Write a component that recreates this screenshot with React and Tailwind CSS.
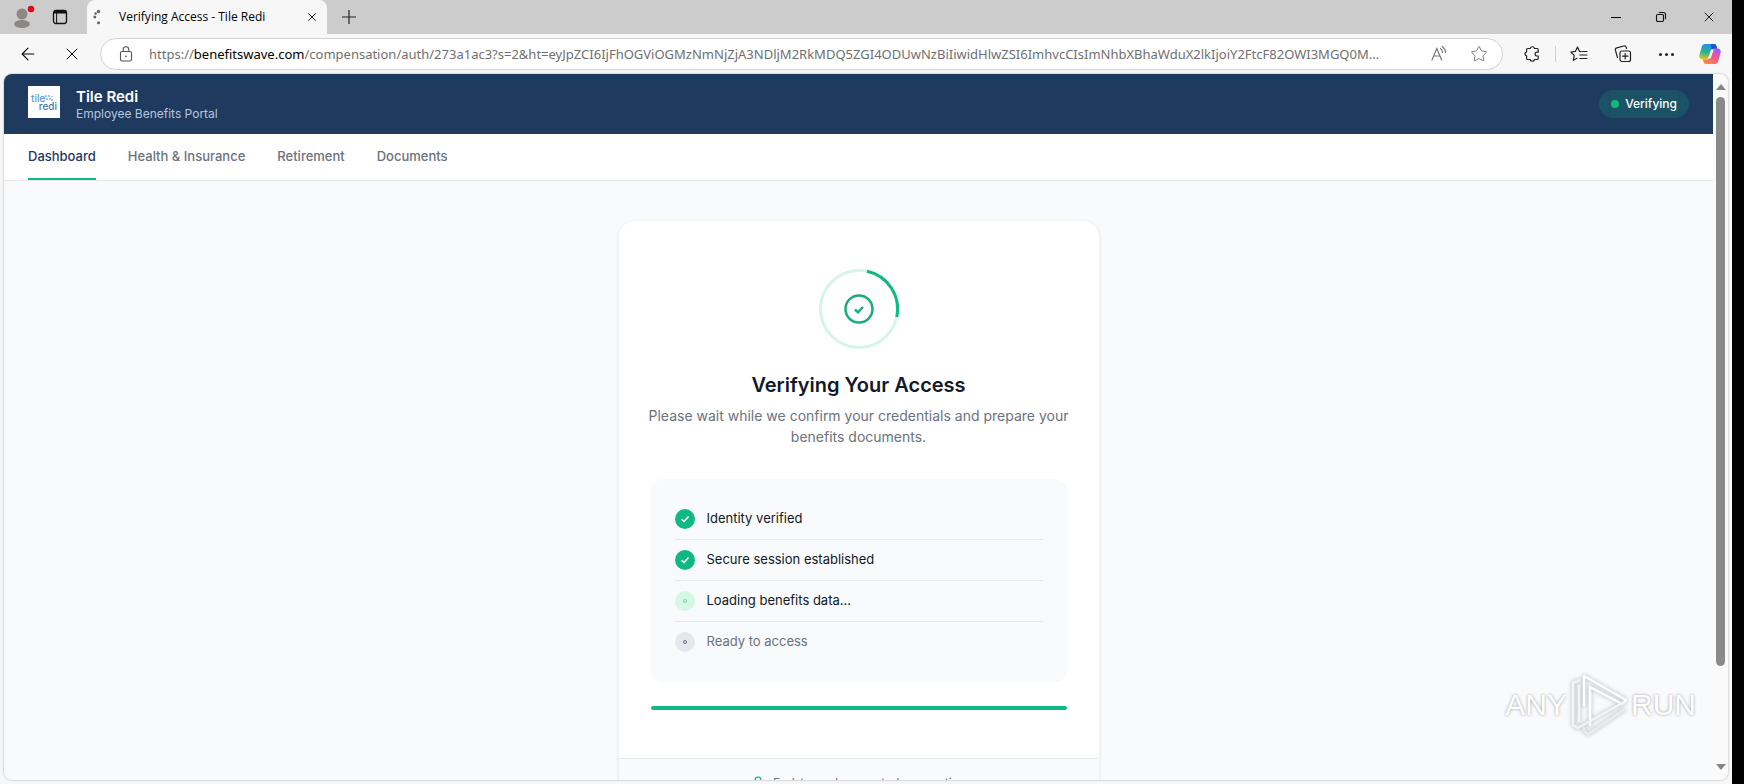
import { ArrowLeft, X, Star, Lock } from "lucide-react";

const URL_REST =
  "/compensation/auth/273a1ac3?s=2&ht=eyJpZCI6IjFhOGViOGMzNmNjZjA3NDljM2RkMDQ5ZGI4ODUwNzBiIiwidHlwZSI6ImhvcCIsImNhbXBhaWduX2lkIjoiY2FtcF82OWI3MGQ0M...";

const navLinks = ["Dashboard", "Health & Insurance", "Retirement", "Documents"];

const steps = [
  { label: "Identity verified", status: "done" },
  { label: "Secure session established", status: "done" },
  { label: "Loading benefits data...", status: "active" },
  { label: "Ready to access", status: "pending" },
];

const ProfileIcon = () => (
  <svg width="24" height="28" viewBox="0 0 24 28" className="block">
    <circle cx="10" cy="11" r="5.5" fill="#8c8885" />
    <ellipse cx="10" cy="21" rx="8" ry="4" fill="#8c8885" />
    <circle cx="19" cy="6" r="4.2" fill="#e3c9c9" />
    <circle cx="19" cy="6" r="3.3" fill="#d90b1c" />
  </svg>
);

const WorkspaceIcon = () => (
  <svg width="16" height="16" viewBox="0 0 16 16" fill="none" stroke="#111" strokeWidth="1.3" className="block">
    <rect x="1.5" y="1.5" width="13" height="13" rx="2.5" />
    <path d="M2 3h12" strokeWidth="3" />
    <path d="M4.6 3v11" strokeWidth="1" />
  </svg>
);

const TabSpinner = () => (
  <svg width="16" height="16" viewBox="0 0 16 16" fill="#666" className="block">
    <circle cx="7.5" cy="2.5" r="1.7" />
    <circle cx="4.6" cy="4.6" r="1.3" />
    <circle cx="3.8" cy="8" r="1.5" />
    <circle cx="7.5" cy="13.8" r="1.5" />
  </svg>
);

const PlusIcon = () => (
  <svg width="16" height="16" viewBox="0 0 16 16" stroke="#222" strokeWidth="1.2" className="block">
    <path d="M8 1v14M1 8h14" />
  </svg>
);

const RestoreIcon = () => (
  <svg width="12" height="12" viewBox="0 0 12 12" fill="none" stroke="#111" strokeWidth="1.1" className="block">
    <rect x="1.5" y="3.5" width="7" height="7" rx="1.2" />
    <path d="M3.8 1.5h4.7a2 2 0 0 1 2 2v4.7" />
  </svg>
);

const PadlockIcon = () => (
  <svg width="16" height="16" viewBox="0 0 16 16" fill="none" stroke="#555" strokeWidth="1.1" className="block">
    <rect x="2.5" y="5.5" width="11" height="9.5" rx="1.6" />
    <path d="M5.2 5.5V3.6a2.8 2.8 0 0 1 5.6 0v1.9" />
    <circle cx="8" cy="10.3" r="0.9" fill="#555" stroke="none" />
  </svg>
);

const ReadAloudIcon = () => (
  <svg width="18" height="18" viewBox="0 0 18 18" fill="none" stroke="#777" strokeWidth="1.2" strokeLinecap="round" className="block">
    <path d="M2 15 6.8 3.5 11.6 15M3.6 11h6.4" />
    <path d="M10.5 3.5q2 1.6 2 4M12.3 1.4q3.2 2.4 3.2 6.2" />
  </svg>
);

// Outline with knobs on the top, left and bottom and a socket cut into the right side
const PuzzleIcon = () => (
  <svg width="18" height="18" viewBox="0 0 18 18" fill="none" stroke="#222" strokeWidth="1.2" strokeLinejoin="round" className="block">
    <path d="M4.600 3.500h2.600a2.200 2.200 0 0 1 4.300 0h2.700a1 1 0 0 1 1 1v2.700h-1.200a1.900 1.900 0 0 0 0 3.800h1.200v2.500a1 1 0 0 1-1 1h-2.700a2.200 2.200 0 0 1-4.300 0H4.600a1 1 0 0 1-1-1v-2.600a2.100 2.100 0 0 1 0-4.100V4.500a1 1 0 0 1 1-1z" />
  </svg>
);

const FavoritesIcon = () => (
  <svg width="18" height="18" viewBox="0 0 18 18" fill="none" stroke="#222" strokeWidth="1.2" strokeLinejoin="round" strokeLinecap="round" className="block">
    <path d="M10.800 6.600 9.600 6.400 7.500 2 5.400 6.400.900 7l3.300 3.300-.8 5 3.600-2" />
    <path d="M12 6.500h5M9.800 10h7.200M9.800 13.500h7.200" />
  </svg>
);

const CollectionsIcon = () => (
  <svg width="18" height="18" viewBox="0 0 18 18" fill="none" stroke="#222" strokeWidth="1.2" strokeLinecap="round" className="block">
    <rect x="6" y="6" width="10.5" height="10.5" rx="2" />
    <path d="M11.2 8.5v5.5M8.500 11.200H14" />
    <path d="M3.500 12.500 1.400 5.200a2 2 0 0 1 1.400-2.400l7-1.800a2 2 0 0 1 2.400 1.400l.3 1" />
  </svg>
);

const CopilotIcon = () => (
  <svg width="24" height="24" viewBox="0 0 24 24" className="block">
    <defs>
      <linearGradient id="cpA" x1="0.4" y1="0" x2="0.2" y2="1">
        <stop offset="0" stopColor="#1f8ff0" />
        <stop offset="0.55" stopColor="#2fb58a" />
        <stop offset="1" stopColor="#f2c51b" />
      </linearGradient>
      <linearGradient id="cpB" x1="0.7" y1="0" x2="0.3" y2="1">
        <stop offset="0" stopColor="#a759f2" />
        <stop offset="0.5" stopColor="#f0568f" />
        <stop offset="1" stopColor="#fb8a3c" />
      </linearGradient>
    </defs>
    <path d="M7 2h9c1.300 0 2 .8 2.400 2l.9 3h-3.500c-1.600 0-2.600.8-3 2.300L11.100 15c-.5 1.600-1.500 2.500-3 2.500H4.500C1.800 17.500.8 15.300 1.500 12.800l2.300-8C4.300 3 5.400 2 7 2z" fill="url(#cpA)" />
    <path d="M13 2h3c1.300 0 2 .8 2.400 2l.9 3h-3.500c-1 0-1.800.3-2.300 1z" fill="#1b57c9" />
    <path d="M17 22H8c-1.300 0-2-.8-2.400-2l-.8-2.500h3.500c1.600 0 2.600-.8 3-2.300L13.200 9c.5-1.600 1.500-2.500 3-2.500h3.300c2.700 0 3.700 2.200 3 4.700l-2.300 8c-.5 1.800-1.600 2.800-3.200 2.800z" fill="url(#cpB)" />
    <path d="M13.200 7.500h2.600l-3.200 9h-2.800z" fill="#f7f7f7" />
  </svg>
);

const TitleBar = () => (
  <div className="flex h-[34px] items-center bg-[#cccccc]">
    <div className="flex w-[87px] items-center gap-4 pl-3">
      <button aria-label="Profile"><ProfileIcon /></button>
      <button aria-label="Workspaces"><WorkspaceIcon /></button>
    </div>
    <div className="flex h-full w-[240px] items-center rounded-t-lg bg-[#f7f7f7] pr-2 pl-1">
      <TabSpinner />
      <span className="ml-3 flex-1 text-xs text-black">Verifying Access - Tile Redi</span>
      <button aria-label="Close tab"><X size={14} strokeWidth={1.5} /></button>
    </div>
    <button aria-label="New tab" className="ml-[14px]"><PlusIcon /></button>
    <div className="ml-auto flex items-center gap-[34px] pr-[15px]">
      <button aria-label="Minimize" className="h-px w-[10px] bg-black" />
      <button aria-label="Restore"><RestoreIcon /></button>
      <button aria-label="Close window"><X size={16} strokeWidth={1.3} /></button>
    </div>
  </div>
);

const Toolbar = () => (
  <div className="flex h-10 items-center bg-[#f7f7f7] pr-[10px] pl-[18px]">
    <button aria-label="Back"><ArrowLeft size={20} strokeWidth={1.3} /></button>
    <button aria-label="Stop" className="ml-6"><X size={20} strokeWidth={1.2} /></button>
    <div className="ml-[18px] flex h-8 min-w-0 flex-1 items-center rounded-full border border-[#d2d2d2] bg-white pr-[14px] pl-[17px]">
      <PadlockIcon />
      <div className="ml-[15px] min-w-0 flex-1 overflow-hidden font-['Noto_Sans',sans-serif] text-[13px] leading-5 whitespace-nowrap text-[#707070]">
        https://<span className="text-black">benefitswave.com</span>{URL_REST}
      </div>
      <button aria-label="Read aloud"><ReadAloudIcon /></button>
      <button aria-label="Add to favorites" className="ml-[22px]"><Star size={18} strokeWidth={1.3} color="#777" /></button>
    </div>
    <div className="ml-5 flex items-center">
      <button aria-label="Extensions"><PuzzleIcon /></button>
      <span className="mx-[14px] h-4 w-px bg-[#d0d0d0]" />
      <button aria-label="Favorites"><FavoritesIcon /></button>
      <button aria-label="Collections" className="ml-[26px]"><CollectionsIcon /></button>
      <button aria-label="Settings and more" className="ml-[27px] flex gap-[3px]">
        <span className="size-[3px] rounded-full bg-[#222]" />
        <span className="size-[3px] rounded-full bg-[#222]" />
        <span className="size-[3px] rounded-full bg-[#222]" />
      </button>
      <button aria-label="Copilot" className="ml-6"><CopilotIcon /></button>
    </div>
  </div>
);

const CompanyLogo = () => (
  <div className="flex size-8 flex-col justify-center bg-white px-[3px] text-[10px] leading-[8px] font-medium text-[#5b9bc8]">
    <span className="flex items-center">
      tile
      <svg width="8" height="6" viewBox="0 0 8 6" fill="#a9c8de" className="block">
        <path d="M0 0h2v2H0zM3 0h2v2H3zM6 1h2v1H6zM1 3h2v2H1zM4 3h2v2H4zM6 4h2v2H6z" />
      </svg>
    </span>
    <span className="self-end text-[#4779a5]">redi</span>
  </div>
);

const PortalHeader = () => (
  <header className="flex h-[60px] shrink-0 items-start bg-[#1e3a5f] px-6 py-3">
    <CompanyLogo />
    <div className="ml-4">
      <h1 className="text-[15px] leading-[22px] font-semibold text-white">Tile Redi</h1>
      <p className="text-xs leading-3 text-[#b4c6de]">Employee Benefits Portal</p>
    </div>
    <div className="ml-auto flex h-7 items-center gap-[6px] self-center rounded-full bg-[#1c5266] px-3 text-xs font-medium text-white">
      <span className="size-2 rounded-full bg-[#10b981]" />
      Verifying
    </div>
  </header>
);

const StepIcon = ({ status }) => {
  if (status === "done") {
    return (
      <svg width="20" height="20" viewBox="0 0 20 20" className="block">
        <circle cx="10" cy="10" r="10" fill="#10b981" />
        <path d="M6.500 10.300 9 12.500l4.500-5" fill="none" stroke="#fff" strokeWidth="1.500" />
      </svg>
    );
  }
  const active = status === "active";
  return (
    <svg width="20" height="20" viewBox="0 0 20 20" className="block">
      <circle cx="10" cy="10" r="10" fill={active ? "#d5f8e4" : "#e5e7eb"} />
      <circle cx="10" cy="10" r="1.500" fill="none" stroke={active ? "#7fceaa" : "#6b7280"} />
    </svg>
  );
};

const VerifyCard = () => (
  <section className="w-full max-w-[480px] overflow-hidden rounded-2xl bg-white shadow-[0_1px_4px_rgba(0,0,0,0.1)]">
    <div className="px-8 py-12">
      <svg width="80" height="80" viewBox="0 0 80 80" fill="none" className="mx-auto block">
        <circle cx="40" cy="40" r="38.500" stroke="#d5f5e7" strokeWidth="3" />
        <path d="M48 2.300A38.500 38.500 0 0 1 77.700 48" stroke="#10b981" strokeWidth="3" />
        <circle cx="40" cy="40" r="13.500" stroke="#1bac78" strokeWidth="2.500" />
        <path d="M36 40.500l3 2.800 5-5.300" stroke="#1bac78" strokeWidth="2.500" />
      </svg>
      <h2 className="mt-6 text-center text-xl leading-6 font-semibold text-[#111827]">Verifying Your Access</h2>
      <p className="-mx-2 mt-2 text-center text-sm leading-[21px] text-[#6b7280]">
        Please wait while we confirm your credentials and prepare your benefits documents.
      </p>
      <ul className="mt-8 rounded-xl bg-[#f8fafc] px-6 py-5">
        {steps.map((step) => (
          <li
            key={step.label}
            className={`flex h-[41px] items-center gap-3 border-b border-[#e5e7eb] text-[13px] last:h-10 last:border-b-0 ${
              step.status === "pending" ? "text-[#6b7280]" : "text-[#111827]"
            }`}
          >
            <StepIcon status={step.status} />
            {step.label}
          </li>
        ))}
      </ul>
      <div className="mt-6 h-1 rounded-full bg-[#10b981]" />
    </div>
    <footer className="flex items-center justify-center gap-2 border-t border-[#e5e7eb] bg-[#f9fafb] py-4 text-xs text-[#6b7280]">
      <Lock size={14} color="#10b981" />
      End-to-end encrypted connection
    </footer>
  </section>
);

const Scrollbar = () => (
  <div className="flex w-[15px] shrink-0 flex-col items-center bg-[#fafafa] pt-[10px] pb-[10px]">
    <svg width="10" height="6" viewBox="0 0 10 6" className="block"><path d="M0 6 5 0l5 6z" fill="#858585" /></svg>
    <div className="mt-[7px] w-[9px] basis-[569px] rounded-full bg-[#8a8a8a]" />
    <svg width="10" height="6" viewBox="0 0 10 6" className="mt-auto block"><path d="M0 0 5 6l5-6z" fill="#858585" /></svg>
  </div>
);

const Watermark = () => (
  <div className="absolute right-8 bottom-[43px] flex items-center gap-1 font-['Liberation_Sans_Narrow','Liberation_Sans',sans-serif] text-[30px] leading-[64px] text-white [text-shadow:0_0_3px_#999]">
    ANY
    <svg width="56" height="64" viewBox="0 0 56 64" fill="none" stroke="#fff" strokeWidth="2.500" strokeLinejoin="round" className="block drop-shadow-[0_0_2px_#aaa]">
      <path d="M13 33V3l42 24-4 4-32-17v39" />
      <path d="M9 7 2 10v42l5 3 46-26" stroke="#f3f4f5" />
      <path d="M54 36 17 61l-4-3v-4" stroke="#ececec" />
      <path d="M8 12v37" stroke="#f3f4f5" />
    </svg>
    RUN
  </div>
);

const App = () => (
  <div className="flex h-screen bg-black font-['Open_Sans',sans-serif]">
    <div className="mr-3 flex min-w-0 flex-1 flex-col bg-[#f7f7f7]">
      <TitleBar />
      <Toolbar />
      <div className="relative mr-1 mb-1 ml-1 flex min-h-0 flex-1 overflow-hidden rounded-lg font-['Inter',sans-serif] shadow-[0_0_2px_#999]">
        <div className="flex min-w-0 flex-1 flex-col overflow-hidden bg-[#f8fafc]">
          <PortalHeader />
          <nav className="flex h-[47px] shrink-0 gap-8 border-b border-[#e5e7eb] bg-white px-6 text-[13px] font-medium">
            {navLinks.map((label, i) => (
              <a
                key={label}
                href="#"
                className={`flex items-center border-b-2 pt-0.5 ${i === 0 ? "border-[#10b981] text-[#1e3a5f]" : "border-transparent text-[#6b7280]"}`}
              >
                {label}
              </a>
            ))}
          </nav>
          <main className="flex justify-center pt-10">
            <VerifyCard />
          </main>
        </div>
        <Scrollbar />
        <Watermark />
      </div>
    </div>
  </div>
);

export default App;
